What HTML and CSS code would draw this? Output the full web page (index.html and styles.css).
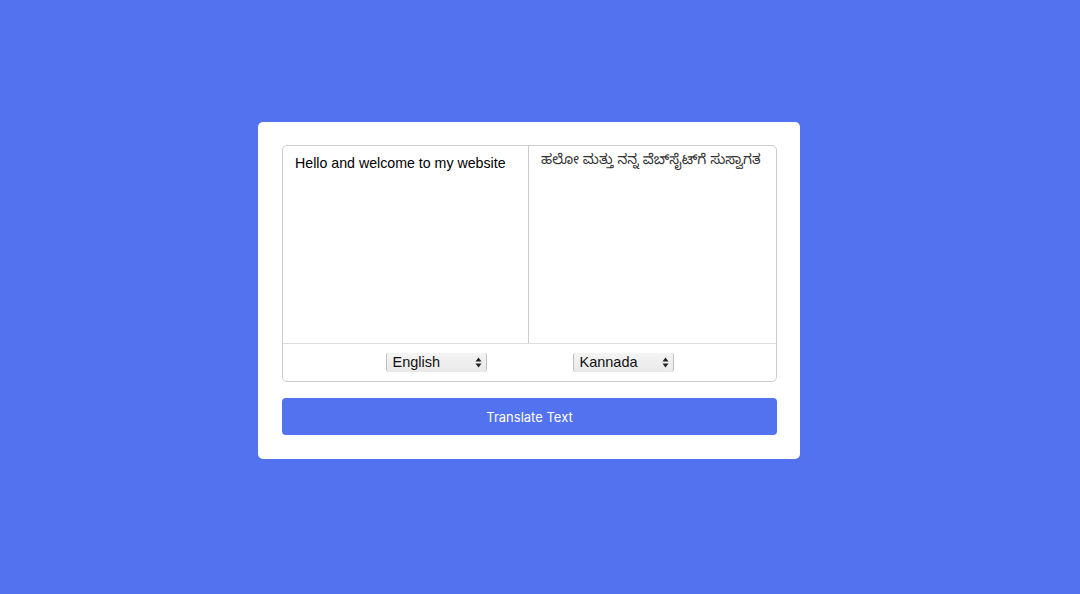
FILE: index.html
```html
<!DOCTYPE html>
<html lang="en">
<head>
<meta charset="utf-8">
<title>Translator</title>
<link rel="stylesheet" href="styles.css">
</head>
<body>
<div class="page">
  <div class="card">
    <div class="box">
      <div class="texts">
        <div class="pane pane-from">Hello and welcome to my website</div>
        <div class="pane pane-to">ಹಲೋ ಮತ್ತು ನನ್ನ ವೆಬ್‌ಸೈಟ್‌ಗೆ ಸುಸ್ವಾಗತ</div>
      </div>
      <div class="controls">
        <div class="select"><span class="select-label">English</span><span class="arrows"><svg width="7" height="11" viewBox="0 0 7 11"><path d="M3.5 0.5 L6.5 4.5 L0.5 4.5 Z" fill="#222"/><path d="M3.5 10.5 L6.5 6.5 L0.5 6.5 Z" fill="#222"/></svg></span></div>
        <div class="select"><span class="select-label">Kannada</span><span class="arrows"><svg width="7" height="11" viewBox="0 0 7 11"><path d="M3.5 0.5 L6.5 4.5 L0.5 4.5 Z" fill="#222"/><path d="M3.5 10.5 L6.5 6.5 L0.5 6.5 Z" fill="#222"/></svg></span></div>
      </div>
    </div>
    <button class="btn">Translate Text</button>
  </div>
</div>
</body>
</html>
```

FILE: styles.css
```css
html, body {
  margin: 0;
  padding: 0;
}
body {
  background: #5372f0;
  font-family: "Liberation Sans", "Noto Sans", "Noto Sans Kannada", sans-serif;
  height: 594px;
}
.page {
  display: flex;
  justify-content: center;
  padding-top: 122px;
  padding-right: 22px;
}
.card {
  width: 542px;
  box-sizing: border-box;
  background: #fff;
  border-radius: 5px;
  padding: 23px 23px 24px 24px;
}
.box {
  border: 1px solid #ccc;
  border-radius: 5px;
}
.texts {
  display: flex;
  height: 197px;
  border-bottom: 1px solid #ddd;
}
.pane {
  padding: 8px 12px;
  font-size: 14.2px;
  line-height: 18px;
  white-space: nowrap;
  overflow: hidden;
}
.pane-from {
  width: 246px;
  box-sizing: border-box;
  color: #000;
  border-right: 1px solid #ccc;
}
.pane-to {
  flex: 1;
  color: #333;
  font-family: "Noto Sans Kannada", "Noto Sans", sans-serif;
  font-size: 13.9px;
  padding-left: 12px;
}
.controls {
  height: 37px;
  display: flex;
  justify-content: center;
  align-items: center;
  gap: 86px;
}
.select {
  width: 101px;
  height: 19px;
  box-sizing: border-box;
  display: flex;
  align-items: center;
  justify-content: space-between;
  padding: 0 4px 0 6px;
  border-left: 1px solid #c0c0c0;
  border-right: 1px solid #c0c0c0;
  border-radius: 3px;
  background: linear-gradient(#f4f4f4, #e9e9e9);
  font-size: 14.5px;
  color: #111;
}
.select-label {
  line-height: 19px;
}
.arrows {
  display: flex;
  align-items: center;
}
.btn {
  display: block;
  margin-top: 16px;
  width: 495px;
  height: 37px;
  border: none;
  border-radius: 4px;
  background: #5372f0;
  color: #fff;
  font-family: "Inter", "Liberation Sans", sans-serif;
  font-size: 13px;
  cursor: pointer;
}
```
